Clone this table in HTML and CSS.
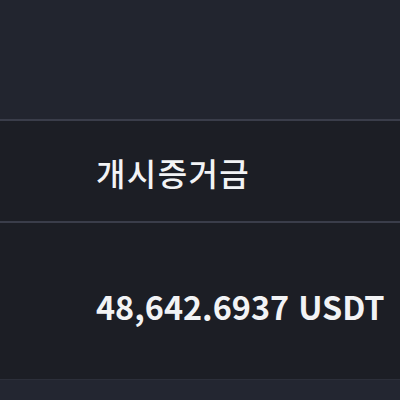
FILE: index.html
```html
<!DOCTYPE html>
<html lang="ko">
<head>
<meta charset="utf-8">
<link rel="stylesheet" href="styles.css">
</head>
<body>
<div class="page">
  <div class="band top"></div>
  <div class="row head"><span class="label">개시증거금</span></div>
  <div class="row value"><span class="amount">48,642.6937 USDT</span></div>
  <div class="band bottom"></div>
</div>
</body>
</html>
```
FILE: styles.css
```css
html, body {
  margin: 0;
  padding: 0;
  background: #1c1e25;
}
.page {
  width: 400px;
  height: 400px;
  display: flex;
  flex-direction: column;
  overflow: hidden;
  font-family: "Noto Sans CJK KR", "Noto Sans", sans-serif;
  color: #f2f3f5;
}
.band.top {
  height: 119px;
  background: #22252f;
  border-bottom: 2px solid #3a3d4a;
}
.row {
  display: flex;
  align-items: center;
  padding-left: 96px;
  background: #1c1e25;
}
.row.head {
  height: 102px;
  border-bottom: 2px solid #3a3d4a;
  padding-top: 2px;
  box-sizing: border-box;
}
.row.value {
  height: 157px;
  border-bottom: 1px solid #2c2f3a;
  padding-top: 8px;
  box-sizing: border-box;
}
.label {
  font-size: 32px;
  font-weight: 500;
  letter-spacing: 1.4px;
}
.amount {
  font-size: 32.4px;
  font-weight: 700;
}
.band.bottom {
  flex: 1;
  background: #232631;
}
```
